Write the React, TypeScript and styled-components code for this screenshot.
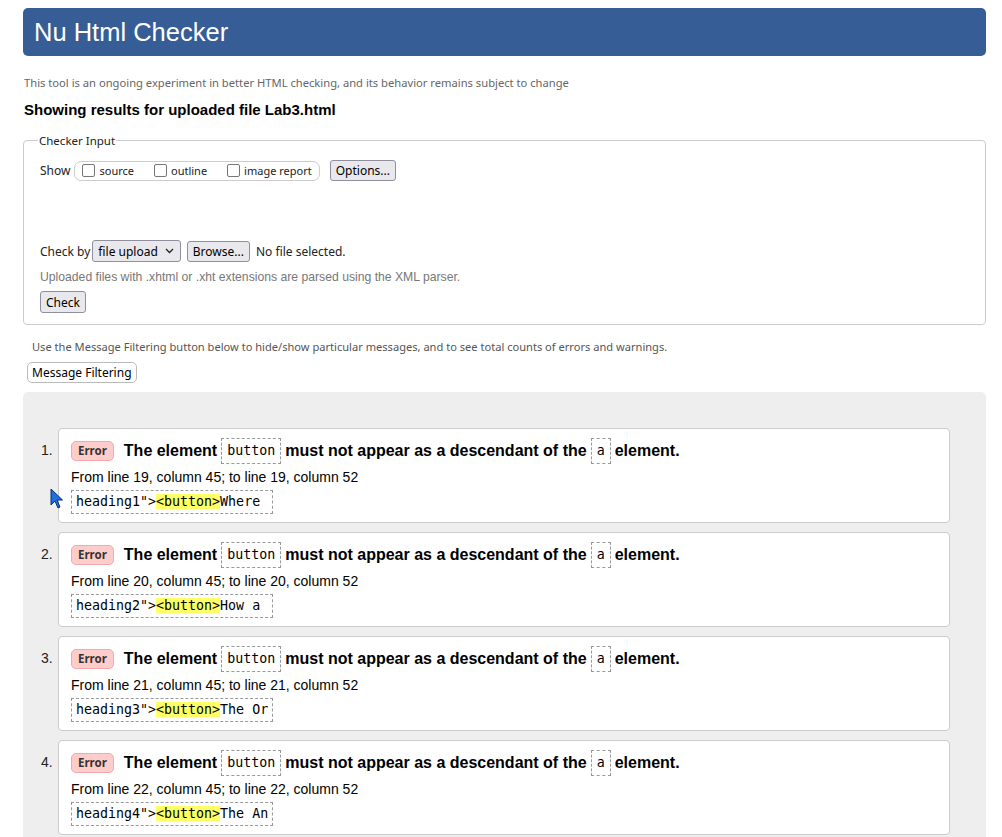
import React from "react";
import styled, { createGlobalStyle } from "styled-components";

const Global = createGlobalStyle`
  html, body { margin: 0; padding: 0; background: #fff; }
  body { font-family: "Liberation Sans", Arial, sans-serif; color: #000; }
  * { box-sizing: border-box; }
`;

const Page = styled.div`
  position: relative;
  padding: 8px 16px 0 23px;
  height: 837px;
  overflow: hidden;
`;

const Header = styled.h1`
  margin: 0;
  height: 48px;
  background: #365d95;
  border-radius: 5px;
  color: #fff;
  font-family: "Liberation Sans", Arial, sans-serif;
  font-weight: normal;
  font-size: 25.5px;
  line-height: 48px;
  padding-left: 11px;
`;

const Intro = styled.p`
  margin: 19px 0 0 1px;
  font-family: "Noto Sans", "Open Sans", sans-serif;
  font-size: 11.2px;
  color: #666;
  line-height: 16px;
`;

const Heading = styled.h2`
  margin: 9px 0 0 1px;
  font-size: 15px;
  font-weight: bold;
  line-height: 20px;
`;

const Fieldset = styled.fieldset`
  margin: 13px 0 0 0;
  border: 1px solid #ccc;
  border-radius: 4px;
  padding: 2px 16px 11px 16px;
  display: flex;
  flex-direction: column;
`;

const Legend = styled.legend`
  font-family: "Noto Sans", "Open Sans", sans-serif;
  font-size: 11.5px;
  color: #222;
  padding: 0 1px;
  margin-left: -2px;
`;

const Row = styled.div`
  display: flex;
  align-items: center;
  gap: 6px;
  font-family: "Noto Sans", "Open Sans", sans-serif;
  font-size: 12px;
  color: #222;
`;

const ShowRow = styled(Row)`
  margin-top: 10px;
`;

const CheckRow = styled(Row)`
  margin-top: 59px;
  gap: 6px;
`;

const Group = styled.div`
  display: flex;
  align-items: center;
  gap: 20px;
  height: 20px;
  border: 1px solid #ccc;
  border-radius: 7px;
  padding: 0 7px 0 7px;
  margin-left: -2px;
  margin-right: 4px;
`;

const CheckLabel = styled.label`
  display: flex;
  align-items: center;
  gap: 4px;
  font-size: 11px;
  color: #222;
`;

const Box = styled.span`
  width: 13px;
  height: 13px;
  border: 1px solid #767676;
  border-radius: 2px;
  background: #fff;
`;

const Btn = styled.span`
  display: inline-flex;
  align-items: center;
  height: 21px;
  padding: 0 5px;
  background: #e9e9ed;
  border: 1px solid #8f8f9d;
  border-radius: 3px;
  font-family: "Noto Sans", "Open Sans", sans-serif;
  font-size: 12px;
  color: #000;
`;

const Select = styled(Btn)`
  gap: 7px;
  padding: 0 6px 0 5px;
  margin-left: -4px;
  height: 22px;
`;

const Note = styled.div`
  margin-top: 7px;
  font-size: 12.2px;
  color: #777;
  line-height: 16px;
`;

const CheckBtn = styled(Btn)`
  margin-top: 6px;
  align-self: flex-start;
  height: 22px;
`;

const FilterNote = styled.p`
  margin: 14px 0 0 9px;
  font-family: "Noto Sans", "Open Sans", sans-serif;
  font-size: 11.1px;
  color: #555;
  line-height: 16px;
`;

const FilterBtn = styled(Btn)`
  margin: 7px 0 0 4px;
  height: 21px;
  background: #fff;
  border: 1px solid #bbb;
  border-radius: 5px;
  padding: 0 4px;
`;

const Results = styled.div`
  margin-top: 9px;
  background: #eee;
  border-radius: 5px 5px 0 0;
  padding: 36px 36px 20px 35px;
`;

const List = styled.ol`
  margin: 0;
  padding: 0;
  list-style: none;
  display: flex;
  flex-direction: column;
  gap: 9px;
`;

const Item = styled.li`
  position: relative;
  display: flex;
`;

const Num = styled.span`
  position: absolute;
  left: -17px;
  top: 14px;
  font-size: 14px;
  color: #222;
`;

const Card = styled.div`
  flex: 1;
  background: #fff;
  border: 1px solid #ccc;
  border-radius: 4px;
  padding: 9px 12px 9px 12px;
  height: 95px;
`;

const Title = styled.div`
  display: flex;
  align-items: center;
  font-size: 16px;
  font-weight: bold;
  line-height: 26px;
  white-space: pre;
`;

const Badge = styled.span`
  display: inline-flex;
  align-items: center;
  height: 20px;
  padding: 0 6px;
  margin-right: 10px;
  background: #fcc;
  border: 1px solid #f2a9a9;
  border-radius: 5px;
  font-size: 11.5px;
  font-weight: bold;
  color: #333;
  font-family: "Noto Sans", "Open Sans", sans-serif;
`;

const Code = styled.code`
  display: inline-block;
  font-family: "DejaVu Sans Mono", monospace;
  font-weight: normal;
  font-size: 13.3px;
  line-height: 24px;
  padding: 0 5px;
  margin: 0 4px;
  border: 1px dashed #999;
`;

const Loc = styled.div`
  margin-top: 3px;
  font-size: 14px;
  line-height: 20px;
`;

const Extract = styled.div`
  width: 202px;
  margin-top: 3px;
  border: 1px dashed #999;
  padding: 0 4px;
  font-family: "DejaVu Sans Mono", monospace;
  font-size: 13.3px;
  line-height: 22px;
  white-space: pre;
`;

const Mark = styled.mark`
  background: #ff6;
  color: inherit;
`;

const Cursor = styled.svg`
  position: absolute;
  left: 50px;
  top: 488px;
`;

const messages = [
  { line: 19, pre: 'heading1">', post: "Where" },
  { line: 20, pre: 'heading2">', post: "How a" },
  { line: 21, pre: 'heading3">', post: "The Or" },
  { line: 22, pre: 'heading4">', post: "The An" },
];

export default function App() {
  return (
    <Page>
      <Global />
      <Header>Nu Html Checker</Header>
      <Intro>
        This tool is an ongoing experiment in better HTML checking, and its behavior remains subject to change
      </Intro>
      <Heading>Showing results for uploaded file Lab3.html</Heading>
      <Fieldset>
        <Legend>Checker Input</Legend>
        <ShowRow>
          <span>Show</span>
          <Group>
            <CheckLabel><Box />source</CheckLabel>
            <CheckLabel><Box />outline</CheckLabel>
            <CheckLabel><Box />image report</CheckLabel>
          </Group>
          <Btn>Options...</Btn>
        </ShowRow>
        <CheckRow>
          <span>Check by</span>
          <Select>
            file upload
            <svg width="9" height="6" viewBox="0 0 9 6">
              <path d="M1 1 L4.5 4.5 L8 1" fill="none" stroke="#222" strokeWidth="1.3" />
            </svg>
          </Select>
          <Btn>Browse...</Btn>
          <span>No file selected.</span>
        </CheckRow>
        <Note>Uploaded files with .xhtml or .xht extensions are parsed using the XML parser.</Note>
        <CheckBtn>Check</CheckBtn>
      </Fieldset>
      <FilterNote>
        Use the Message Filtering button below to hide/show particular messages, and to see total counts of errors and warnings.
      </FilterNote>
      <FilterBtn>Message Filtering</FilterBtn>
      <Results>
        <List>
          {messages.map((m, i) => (
            <Item key={m.line}>
              <Num>{i + 1}.</Num>
              <Card>
                <Title>
                  <Badge>Error</Badge>
                  The element<Code>button</Code>must not appear as a descendant of the<Code>a</Code>element.
                </Title>
                <Loc>
                  From line {m.line}, column 45; to line {m.line}, column 52
                </Loc>
                <Extract>
                  {m.pre}
                  <Mark>&lt;button&gt;</Mark>
                  {m.post}
                </Extract>
              </Card>
            </Item>
          ))}
        </List>
      </Results>
      <Cursor width="14" height="22" viewBox="0 0 14 22">
        <path d="M1 1 L1 17 L5 13 L8 20 L10 19 L7 12 L12.5 12 Z" fill="#1e6fe0" stroke="#0b2f6b" strokeWidth="1" />
      </Cursor>
    </Page>
  );
}
